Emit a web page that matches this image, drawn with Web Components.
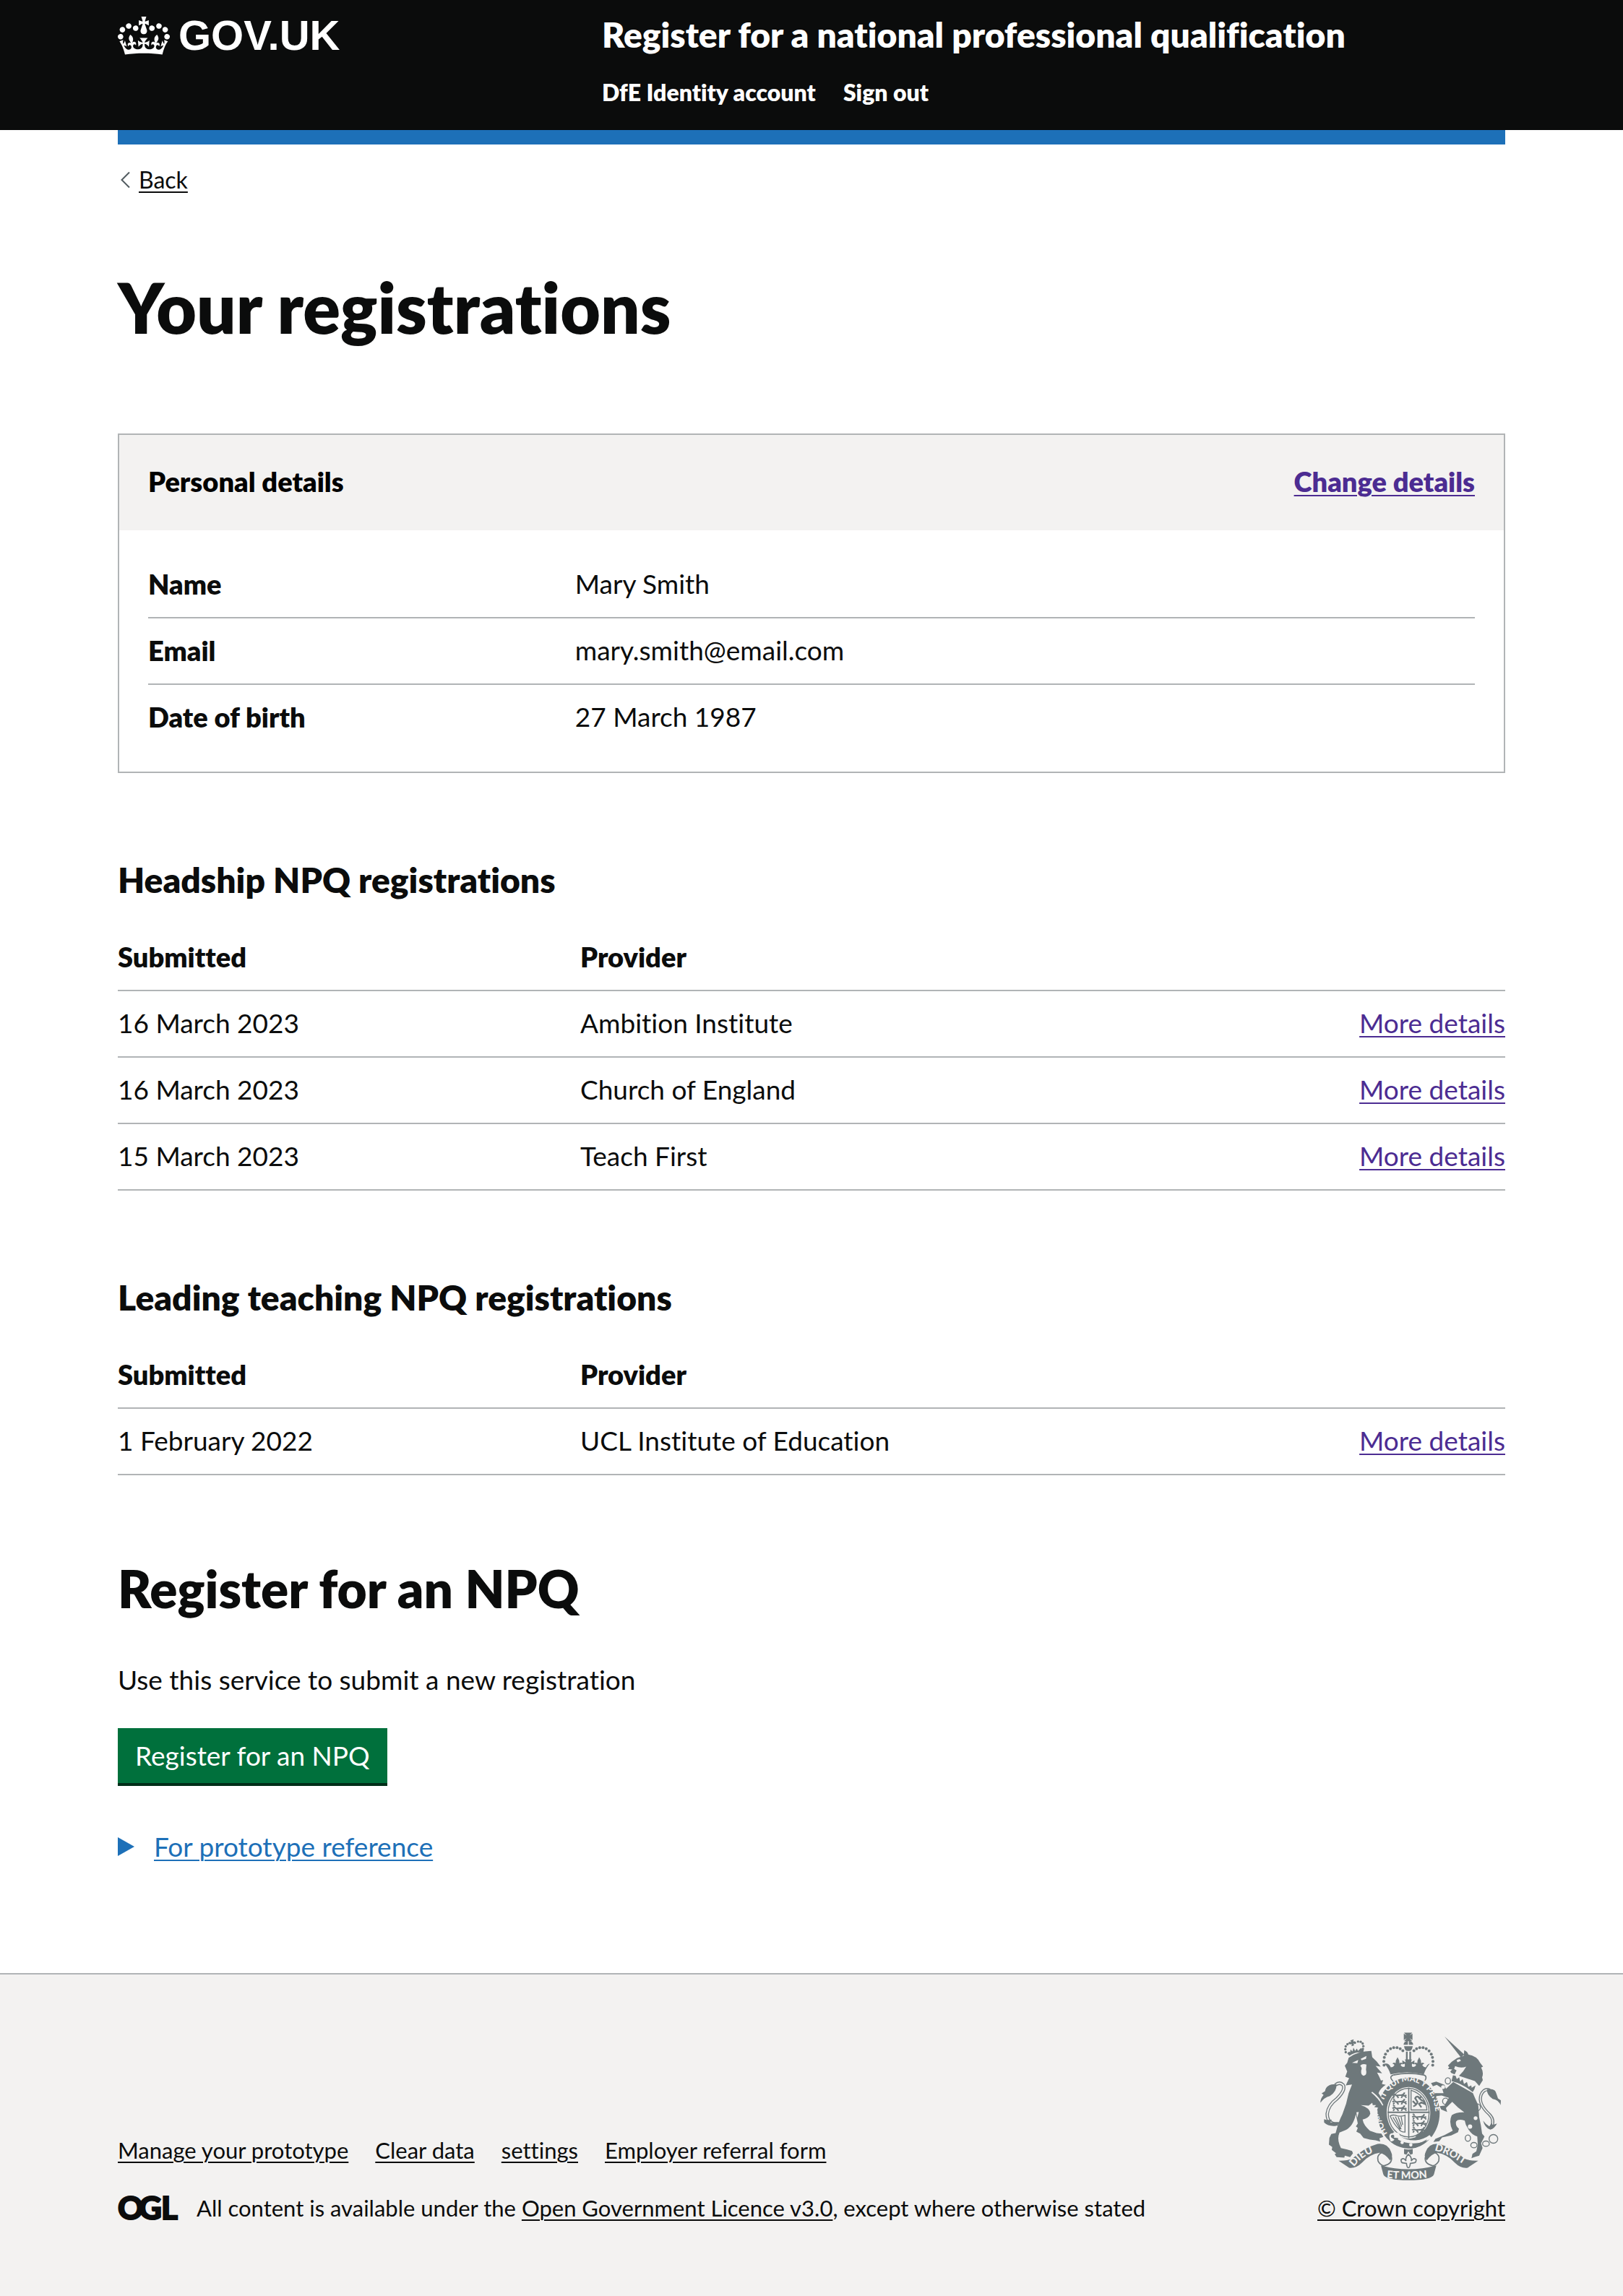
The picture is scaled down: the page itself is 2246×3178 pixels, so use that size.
<!DOCTYPE html>
<html lang="en">
<head>
<meta charset="utf-8">
<meta name="viewport" content="width=device-width, initial-scale=1">
<title>Your registrations</title>
<style>
  :root {
    --ink: #0b0c0c;
    --line: #b1b4b6;
    --grey: #f3f2f1;
    --blue: #1d70b8;
    --visited: #4c2c92;
    --crest: #6e787b;
    --bold: 800;
  }
  body {
    margin: 0;
    background: #fff;
    color: var(--ink);
    font: 400 37px/50px Lato, "Open Sans", sans-serif;
    font-variant-ligatures: none;
  }
</style>
</head>
<body>
<npq-header service="Register for a national professional qualification">
  <a href="#account">DfE Identity account</a>
  <a href="#sign-out">Sign out</a>
</npq-header>

<npq-container>
  <npq-back-link>Back</npq-back-link>
  <main>
    <npq-heading size="xl">Your registrations</npq-heading>

    <summary-card heading="Personal details" action="Change details">
      <summary-item key="Name">Mary Smith</summary-item>
      <summary-item key="Email">mary.smith@email.com</summary-item>
      <summary-item key="Date of birth">27 March 1987</summary-item>
    </summary-card>

    <npq-heading size="m">Headship NPQ registrations</npq-heading>
    <registration-table>
      <registration-entry submitted="16 March 2023" provider="Ambition Institute"></registration-entry>
      <registration-entry submitted="16 March 2023" provider="Church of England"></registration-entry>
      <registration-entry submitted="15 March 2023" provider="Teach First"></registration-entry>
    </registration-table>

    <npq-heading size="m">Leading teaching NPQ registrations</npq-heading>
    <registration-table>
      <registration-entry submitted="1 February 2022" provider="UCL Institute of Education"></registration-entry>
    </registration-table>

    <npq-heading size="l">Register for an NPQ</npq-heading>
    <start-panel action="Register for an NPQ">Use this service to submit a new registration</start-panel>
    <npq-details summary="For prototype reference"></npq-details>
  </main>
</npq-container>

<npq-footer>
  <a href="#manage">Manage your prototype</a>
  <a href="#clear">Clear data</a>
  <a href="#settings">settings</a>
  <a href="#referral">Employer referral form</a>
</npq-footer>

<script>
class BaseElement extends HTMLElement {
  render(css, html) {
    const root = this.attachShadow({ mode: 'open' });
    const tpl = document.createElement('template');
    tpl.innerHTML = `<style>:host{display:block} *{box-sizing:border-box} ${css}</style>${html}`;
    root.append(tpl.content.cloneNode(true));
    return root;
  }
}

customElements.define('npq-container', class extends BaseElement {
  connectedCallback() {
    this.render(`
      :host { max-width: 1920px; margin: 0 auto; }
    `, `<slot></slot>`);
  }
});

customElements.define('npq-crown', class extends BaseElement {
  connectedCallback() {
    this.render(`
      :host { width: 72px; height: 53px; }
      svg { display: block; width: 100%; height: 100%; }
    `, `<svg viewBox="0 0 132 97" fill="currentColor" aria-hidden="true"><path fill-rule="evenodd" d="M25 30.2c3.5 1.5 7.7-.2 9.1-3.7 1.5-3.6-.2-7.8-3.9-9.2-3.6-1.4-7.6.3-9.1 3.9-1.4 3.5.3 7.5 3.9 9zM9 39.5c3.6 1.5 7.8-.2 9.2-3.7 1.5-3.6-.2-7.8-3.9-9.1-3.6-1.5-7.6.2-9.1 3.8-1.4 3.5.3 7.5 3.8 9zM4.4 57.2c3.5 1.5 7.7-.2 9.1-3.8 1.5-3.6-.2-7.7-3.9-9.1-3.5-1.5-7.6.3-9.1 3.8-1.4 3.5.3 7.6 3.9 9.1zm38.3-21.4c3.5 1.5 7.7-.2 9.1-3.8 1.5-3.6-.2-7.7-3.9-9.1-3.6-1.5-7.6.3-9.1 3.8-1.3 3.6.4 7.7 3.9 9.1zm64.4-5.6c-3.6 1.5-7.8-.2-9.1-3.7-1.5-3.6.2-7.8 3.8-9.2 3.6-1.4 7.7.3 9.2 3.9 1.3 3.5-.4 7.5-3.9 9zm15.9 9.3c-3.6 1.5-7.7-.2-9.1-3.7-1.5-3.6.2-7.8 3.7-9.1 3.6-1.5 7.7.2 9.2 3.8 1.5 3.5-.3 7.5-3.8 9zm4.7 17.7c-3.6 1.5-7.8-.2-9.2-3.8-1.5-3.6.2-7.7 3.9-9.1 3.6-1.5 7.7.3 9.2 3.8 1.3 3.5-.4 7.6-3.9 9.1zM89.3 35.8c-3.6 1.5-7.8-.2-9.2-3.8-1.4-3.6.2-7.7 3.9-9.1 3.6-1.5 7.7.3 9.2 3.8 1.4 3.6-.3 7.7-3.9 9.1zM69.7 17.7l8.9 4.7V9.3l-8.9 2.8c-.2-.3-.5-.6-.9-.9L72.4 0H59.6l3.5 11.2c-.3.3-.6.5-.9.9l-8.8-2.8v13.1l8.8-4.7c.3.3.6.7.9.9l-5 15.4v.1c-.2.8-.4 1.6-.4 2.4 0 4.1 3.1 7.5 7 8.1h.2c.3 0 .7.1 1 .1.4 0 .7 0 1-.1h.2c4-.6 7.1-4.1 7.1-8.1 0-.8-.1-1.7-.4-2.4V34l-5.1-15.4c.4-.2.7-.6 1-.9zM66 92.8c16.9 0 32.8 1.1 47.1 3.2 4-16.9 8.9-26.7 14-33.5l-9.6-3.4c1 4.9 1.1 7.2 0 10.2-1.5-1.4-3-4.3-4.2-8.7L108.6 76c2.8-2 5-3.2 7.5-3.3-4.4 9.4-10 11.9-13.6 11.2-4.3-.8-6.3-4.6-5.6-7.9 1-4.7 5.7-5.9 8-.5 4.3-8.7-3-11.4-7.6-8.8 7.1-7.2 7.9-13.5 2.1-21.1-8 6.1-8.1 12.3-4.5 20.8-4.7-5.4-12.1-2.5-9.5 6.2 3.4-5.2 7.9-2 7.2 3.1-.6 4.3-6.4 7.8-13.5 7.2-10.3-.9-10.9-8-11.2-13.8 2.5-.5 7.1 1.8 11 7.3L80.2 60c-4.1 4.4-8 5.3-12.3 5.4 1.4-4.4 8-11.6 8-11.6H55.5s6.4 7.2 7.9 11.6c-4.2-.1-8-1-12.3-5.4l1.4 16.4c3.9-5.5 8.5-7.7 10.9-7.3-.3 5.8-.9 12.8-11.1 13.8-7.2.6-12.9-2.9-13.5-7.2-.7-5 3.8-8.3 7.1-3.1 2.7-8.7-4.6-11.6-9.4-6.2 3.7-8.5 3.6-14.7-4.6-20.8-5.8 7.6-5 13.9 2.2 21.1-4.7-2.6-11.9.1-7.7 8.8 2.3-5.5 7.1-4.2 8.1.5.7 3.3-1.3 7.1-5.7 7.9-3.5.7-9-1.8-13.5-11.2 2.5.1 4.7 1.3 7.5 3.3l-4.7-15.4c-1.2 4.4-2.7 7.2-4.3 8.7-1.1-3-.9-5.3 0-10.2l-9.5 3.4c5 6.9 9.9 16.7 14 33.5 14.8-2.1 30.8-3.2 47.7-3.2z"/></svg>`);
  }
});

customElements.define('npq-header', class extends BaseElement {
  connectedCallback() {
    this.render(`
      :host { background: linear-gradient(var(--ink) 0 calc(100% - 20px), #fff 0); color: #fff; }
      header { max-width: 1920px; margin: 0 auto; border-bottom: 20px solid var(--blue); display: flex; padding: 18px 0 32px; }
      .brand { flex: 0 0 calc(100% / 3 + 30px); }
      .logo { display: inline-flex; align-items: center; gap: 12px; color: inherit; text-decoration: none; font: 700 58px/62px "Liberation Sans", Arial, sans-serif; }
      .service { display: block; font-size: 48px; line-height: 60px; font-weight: var(--bold); color: inherit; text-decoration: none; }
      nav { display: flex; gap: 38px; margin-top: 30px; font-size: 32px; line-height: 40px; font-weight: var(--bold); }
      ::slotted(a) { color: inherit; text-decoration: none; }
    `, `
      <header>
        <div class="brand"><a class="logo" href="#govuk"><npq-crown></npq-crown><span>GOV.UK</span></a></div>
        <div>
          <a class="service" href="#service">${this.getAttribute('service')}</a>
          <nav><slot></slot></nav>
        </div>
      </header>`);
  }
});

customElements.define('npq-back-link', class extends BaseElement {
  connectedCallback() {
    this.render(`
      :host { padding-top: 29px; font-size: 32px; line-height: 40px; }
      a { display: inline-flex; align-items: center; gap: 12px; padding-left: 4px; color: inherit; text-decoration: none; }
      svg { display: block; width: 13px; height: 24px; }
      span { text-decoration: underline; text-decoration-thickness: 2px; text-underline-offset: 4px; }
    `, `<a href="#back"><svg viewBox="0 0 13 24" fill="none" stroke="#505a5f" stroke-width="2" aria-hidden="true"><path d="M12 1.500 1.500 12 12 22.500"/></svg><span><slot></slot></span></a>`);
  }
});

customElements.define('npq-heading', class extends BaseElement {
  connectedCallback() {
    const size = this.getAttribute('size');
    const tag = { xl: 'h1', l: 'h2', m: 'h3' }[size];
    this.render(`
      h1, h2, h3 { margin: 0; font-weight: var(--bold); }
      h1 { padding: 106px 0 125px; font-size: 96px; line-height: 100px; }
      h2 { padding: 117px 0 61px; font-size: 71px; line-height: 80px; }
      h3 { padding: 118px 0 32px; font-size: 48px; line-height: 60px; }
    `, `<${tag}><slot></slot></${tag}>`);
  }
});

customElements.define('summary-item', class extends BaseElement {
  connectedCallback() { this.render('', '<slot></slot>'); }
});

customElements.define('summary-card', class extends BaseElement {
  connectedCallback() {
    const items = [...this.querySelectorAll('summary-item')];
    items.forEach((item, i) => { item.slot = 'value-' + i; });
    this.render(`
      :host { border: 2px solid var(--line); }
      .head { display: flex; justify-content: space-between; padding: 39px 40px 43px; background: var(--grey); font-size: 38px; font-weight: var(--bold); }
      h2 { margin: 0; font: inherit; color: #000; }
      a { color: var(--visited); text-underline-offset: 4px; text-decoration-thickness: 2px; }
      dl { margin: 0; padding: 30px 40px; }
      .row { display: flex; padding: 19px 0 21px; border-bottom: 2px solid var(--line); }
      .row:last-child { border-bottom: 0; }
      dt { flex: 0 0 calc(30% + 40px); font-size: 38px; font-weight: var(--bold); }
      dd { margin: 0; }
    `, `
      <div class="head"><h2>${this.getAttribute('heading')}</h2><a href="#change">${this.getAttribute('action')}</a></div>
      <dl>${items.map((item, i) => `<div class="row"><dt>${item.getAttribute('key')}</dt><dd><slot name="value-${i}"></slot></dd></div>`).join('')}</dl>`);
  }
});

customElements.define('registration-table', class extends BaseElement {
  connectedCallback() {
    const rows = [...this.querySelectorAll('registration-entry')].map(e => `
      <tr><td>${e.getAttribute('submitted')}</td><td>${e.getAttribute('provider')}</td><td><a href="#details">More details</a></td></tr>`).join('');
    this.render(`
      table { width: 100%; table-layout: fixed; border-collapse: separate; border-spacing: 0; }
      th, td { padding: 19px 0 21px; border-bottom: 2px solid var(--line); text-align: left; font-weight: 400; }
      th { font-size: 38px; font-weight: var(--bold); }
      td:last-child { text-align: right; }
      a { color: var(--visited); text-underline-offset: 4px; text-decoration-thickness: 2px; }
    `, `
      <table>
        <thead><tr><th scope="col">Submitted</th><th scope="col">Provider</th><th></th></tr></thead>
        <tbody>${rows}</tbody>
      </table>`);
  }
});

customElements.define('start-panel', class extends BaseElement {
  connectedCallback() {
    this.render(`
      p { margin: 0 0 42px; }
      button { display: block; margin: 0; padding: 13px 24px; border: 0; border-radius: 0; background: #00703c; box-shadow: 0 4px 0 #002d18; color: #fff; font: inherit; font-variant-ligatures: none; }
    `, `<p><slot></slot></p><button type="button">${this.getAttribute('action')}</button>`);
  }
});

customElements.define('npq-details', class extends BaseElement {
  connectedCallback() {
    this.render(`
      :host { padding: 62px 0 150px; color: var(--blue); }
      summary { display: inline-flex; align-items: center; gap: 27px; list-style: none; }
      svg { display: block; width: 23px; height: 26px; }
      span { text-decoration: underline; text-decoration-thickness: 2px; text-underline-offset: 4px; }
    `, `<details><summary><svg viewBox="0 0 23 26" fill="currentColor" aria-hidden="true"><path d="M0 0 23 13 0 26z"/></svg><span>${this.getAttribute('summary')}</span></summary></details>`);
  }
});

customElements.define('royal-arms', class extends BaseElement {
  connectedCallback() {
    const bead = (x, y, r = 6) => `<circle cx="${x}" cy="${y}" r="${r}"/>`;
    const arch = [[349,236],[348,220],[350,204],[355,190],[364,177],[376,168],[389,163],[403,163],[416,168],[427,176]];
    const beads = arch.map(([x, y]) => bead(x, y) + bead(900 - x, y)).join('');
    const small = [[190,182],[188,170],[190,158],[197,149],[206,144],[228,143],[241,138],[252,139],[260,146],[263,157],[261,168]];
    const links = [[614,301,11,13],[604,386,12,13],[737,411,12,14],[697,539,11,13],[722,568,13,11],[772,562,14,11],[803,542,18,18]];
    const lions = (x, y) => [0, 27, 54].map(d => `<path d="M${x} ${y + d}q8-8 16 0l22-2q10-2 12-11m-12 11q10 6 20 0m-50 4l-5 8m16-8l6 8m16-9l-4 9m14-8l7 7m-48-19l-8-3"/>`).join('');
    this.render(`
      :host { width: 250px; height: 205px; color: var(--crest); }
      svg { display: block; width: 100%; height: 100%; }
      text { font-family: Lato, sans-serif; font-weight: 900; }
    `, `<svg viewBox="84 100 750 614" fill="currentColor" role="img" aria-label="Royal coat of arms">
      <defs>
        <path id="garter" d="M375 534A112 133 0 1 1 516 543"/>
        <path id="mottoL" d="M224 659Q275 592 350 593"/>
        <path id="mottoR" d="M558 591Q618 602 698 662"/>
        <path id="mottoC" d="M360 704Q450 713 544 702"/>
      </defs>

      <!-- imperial crown -->
      <path d="M432 101h34l-11 12 12-8v27l-12-8 11 12h-34l11-12-12 8v-27l12 8z"/>
      <path d="M430 151q1-14 18-16v16zM452 135q17 2 18 16h-18zM432 157h36q-3 18-12 20h-12q-9-2-12-20z"/>
      <path d="M440 180h7v34h-7zM454 180h7v34h-7z"/>
      ${beads}
      <path d="M361 229q12 4 16 16 10 0 15-8-1-7-8-6 3-9 13-3-1-12 8-25 9 13 8 25 10-6 13 3-7-1-8 6 6 9 17 5 1-8 0-12l-10 3v-17q8 6 14 8l-3-12h28l-3 12q6-2 14-8v17l-10-3q-1 4 0 12 11 4 17-5-1-7-8-6 3-9 13-3-1-12 8-25 9 13 8 25 10-6 13 3-7-1-8 6 5 8 15 8 4-12 16-16-18 22-25 45-35-8-69-8-35 0-69 8-7-23-25-45z"/>
      <path d="M388 277q62-14 126 0 10 2 9 13-1 8-8 12" fill="none" stroke="currentColor" stroke-width="5"/>
      <path d="M388 277q-14 4-10 14 3 6 9 12" fill="none" stroke="currentColor" stroke-width="5"/>

      <!-- garter and shield -->
      <path fill-rule="evenodd" d="M452 287C522 287 580 352 580 434 580 516 522 582 452 582 380 582 322 516 322 434 322 352 380 287 452 287zM451 327C402 327 360 374 360 432 360 492 402 541 451 541 500 541 541 492 541 432 541 374 500 327 451 327z"/>
      <ellipse cx="451" cy="433" rx="85" ry="101" fill="none" stroke="currentColor" stroke-width="4"/>
      <path d="M449 330h5v210h-5zM364 429h174v6h-174z"/>
      <g fill="none" stroke="currentColor" stroke-width="6">
        ${lions(384, 362)}${lions(466, 452)}
        <path stroke-width="4" d="M461 340v82h66q-4-60-66-82z"/>
        <path stroke-width="7" d="M470 407q14-4 18-18l-10-16q4-8 12-6l14 14q12 2 14 16l-14-6-10 6 10 14m-24-14l-12-12m26-8l10-12"/>
        <path stroke-width="4" d="M374 447q12-6 22-3 20 8 40 0v70q-20 0-26-14-18-14-36-53zM386 452l30 50M396 450l24 52M408 451l14 40M420 450l6 34"/>
      </g>
      <path d="M478 532q20-12 30-28 8 20 12 22l-22 14z"/>
      <g fill="var(--grey)">
        <path d="M372 540q-5-22 14-22 4-8 14-2 16 2 14 14 28 20 66 18 34-4 58-22l10 12q-40 26-92 22-40-6-58-22-10 16-22 14z"/>
        <text font-size="34"><textPath href="#garter" startOffset="18">HONI SOIT QUI MAL Y PENSE</textPath></text>
      </g>
      <path d="M378 535q-2-10 8-10 8 2 4 12l18 2-6 18q-10 8-18 0 12-4 8-12z"/>
      <path d="M390 548q60 40 138-4-20 34-68 38-46-2-70-34z"/>
      <g fill="var(--grey)"><circle cx="424" cy="557" r="7"/><circle cx="460" cy="567" r="7"/></g>

      <!-- lion -->
      <g>
        ${small.map(([x, y]) => bead(x, y, 5)).join('')}
        <path d="M196 187q8-10 12-4l2-12 8 8 4-16 7 14 7-10 5 10 12-12q4 8 12 4l-2 16q-30-8-58 12z"/>
        <path d="M209 133l14-4-2 9 7-1 3 9-8-2 1 10-10 3 1-9-7 2-2-9 7-1z"/>
        <path d="M202 205Q240 178 296 177L300 203 318 220 335 242 314 239 325 252 341 270 320 267 328 282 336 300 345 298 340 314 356 318Q334 332 326 352L345 382 359 416 356 462 338 450 352 473 332 462 329 446 322 436 334 434 320 422 325 412 308 410 316 402 302 402 300 392 285 404 252 402Q292 414 292 438 286 456 260 462 264 486 290 508L318 518 338 520 346 534 330 540 333 553 314 548 290 545 264 538 250 520 234 512 240 496 232 490 240 478 232 440Q220 492 188 506L164 516Q154 540 164 566L170 580 196 586 216 592 220 602 208 618 186 612 184 620 152 618 144 606 150 602 132 588 134 576 120 566 122 538 130 522 148 518Q160 470 176 440 194 396 202 352L216 316 190 320 204 290 188 284 196 262 186 238 196 226z"/>
        <path d="M158 480q-45 2-45-42 4-36 40-62 38-38 26-58-14-14-32 0" fill="none" stroke="currentColor" stroke-width="14"/>
        <path d="M158 480q-45 2-45-42 4-36 40-62 38-38 26-58-14-14-32 0" fill="none" stroke="var(--grey)" stroke-width="6"/>
        <path d="M152 315Q108 314 104 344L90 353 98 360Q84 376 85 392 100 370 124 364 152 348 152 315zM100 460q16 6 32 2l-6 12 44-2-20 16q-32 4-50-14z"/>
        <g fill="var(--grey)">
          <path d="M216 226l26-12-4 14zM252 210l24-12-2 12-18 6z"/>
          <path d="M250 238q10-10 26-4l-2 20q6 24-10 26-12-2-10-22 6-10-4-20z"/>
          <path d="M300 346q34 26 46 56l-4 2q-18-32-46-54zM244 430l-6 24-4-22z"/>
        </g>
      </g>

      <!-- unicorn -->
      <g>
        <path d="M600 117L682 192 668 204z"/>
        <path d="M614 238L630 222 652 207 680 197 682 174Q696 180 699 192 734 198 748 226L760 242 752 246Q764 268 756 286L759 298 744 322 726 302 660 280Q680 262 690 242 668 250 644 240L640 252 650 258 642 274 628 268 624 262 632 254 614 252 620 244z"/>
        <path d="M635 278l11 2 5 14 10-8 4 18 10-10 6 20 12-8 6 20 12-6 2 10 16-10q-4 18-12 28-40-34-88-46z"/>
        <path d="M636 306L718 352Q728 376 740 402L744 452Q752 486 756 520L766 532 752 560 758 580 744 612 724 618 712 622 716 604 732 594 738 566 736 532Q712 526 698 500 686 482 684 466 656 458 648 470 644 488 660 500L656 514 628 528 590 536 578 552 554 555 562 542 600 526 634 508Q616 474 630 444 650 430 682 432 652 410 632 388L606 414 611 430 586 420 580 406 600 404 606 392 618 372 588 362 566 364 564 384 556 374 560 352 596 352 590 332 568 318 552 324 544 310 566 304 600 318 606 334z"/>
        <path d="M794 494q16-30-8-54-48-44-34-82 14-28 36-18" fill="none" stroke="currentColor" stroke-width="13"/>
        <path d="M794 494q16-30-8-54-48-44-34-82 14-28 36-18" fill="none" stroke="var(--grey)" stroke-width="5"/>
        <path d="M776 336Q812 330 816 356L822 374 834 382 833 402Q824 380 800 376 776 362 776 336zM760 466l12 14 14 10 10-14 4 8 18-6q-10 20-28 26-22-8-30-38z"/>
        <path d="M650 216q14-10 18 2l-14 6z" fill="var(--grey)"/>
        <g fill="var(--grey)"><circle cx="706" cy="491" r="9"/><circle cx="729" cy="456" r="8"/><circle cx="594" cy="327" r="8"/></g>
        <g fill="none" stroke="currentColor" stroke-width="4">
          ${links.map(([x, y, a, b]) => `<ellipse cx="${x}" cy="${y}" rx="${a}" ry="${b}"/>`).join('')}
        </g>
      </g>

      <!-- ribbon -->
      <path d="M160 633Q196 634 218 624 262 580 322 563 364 558 378 596 388 616 374 632 354 604 330 600 290 606 258 640 232 666 204 662z"/>
      <path d="M740 633Q704 634 682 624 638 580 578 563 536 558 522 596 512 616 526 632 546 604 570 600 610 606 642 640 668 666 696 662z"/>
      <path d="M336 652Q450 684 566 652L556 690Q546 714 450 714 356 714 346 690z"/>
      <g fill="none" stroke="currentColor" stroke-width="5">
        <path d="M338 600q-20 10-14 34 8 16 24 20 36-8 32-36M562 600q20 10 14 34-8 16-24 20-36-8-32-36"/>
        <path d="M450 606q-14 14-10 28-8-16-20-6-2 14 10 14l12 2q2 18 8 18 6 0 8-18l12-2q14 0 12-14-12-10-20 6 4-14-12-28z"/>
      </g>
      <path d="M432 584q18 4 36 0v20l-10 4-8-14-8 14-10-4z"/>
      <g fill="var(--grey)" font-size="43">
        <text><textPath href="#mottoL">DIEU</textPath></text>
        <text><textPath href="#mottoC">ET MON</textPath></text>
        <text><textPath href="#mottoR">DROIT</textPath></text>
      </g>
    </svg>`);
  }
});

customElements.define('npq-footer', class extends BaseElement {
  connectedCallback() {
    this.render(`
      :host { background: var(--grey); border-top: 2px solid var(--line); font-size: 31px; line-height: 40px; }
      footer { max-width: 1920px; margin: 0 auto; padding: 80px 0 104px; display: flex; justify-content: space-between; align-items: flex-end; }
      nav { display: flex; flex-wrap: wrap; gap: 37px; margin-bottom: 40px; }
      a, ::slotted(a) { color: inherit; text-decoration: underline; text-decoration-thickness: 2px; text-underline-offset: 4px; }
      .licence { display: flex; align-items: center; gap: 17px; }
      .ogl { display: block; width: 92px; height: 56px; margin: -8px 0; }
      .ogl text { font: 900 44px Lato, sans-serif; stroke: currentColor; stroke-width: 2; }
      .copyright { display: flex; flex-direction: column; align-items: flex-end; gap: 18px; }
      royal-arms { margin-right: 6px; }
    `, `
      <footer>
        <div>
          <nav><slot></slot></nav>
          <div class="licence">
            <svg class="ogl" viewBox="0 0 92 56" fill="currentColor"><text y="44" x="0 29 60">OGL</text></svg>
            <span>All content is available under the <a href="#ogl">Open Government Licence v3.0</a>, except where otherwise stated</span>
          </div>
        </div>
        <div class="copyright"><royal-arms></royal-arms><a href="#crown">© Crown copyright</a></div>
      </footer>`);
  }
});
</script>
</body>
</html>
